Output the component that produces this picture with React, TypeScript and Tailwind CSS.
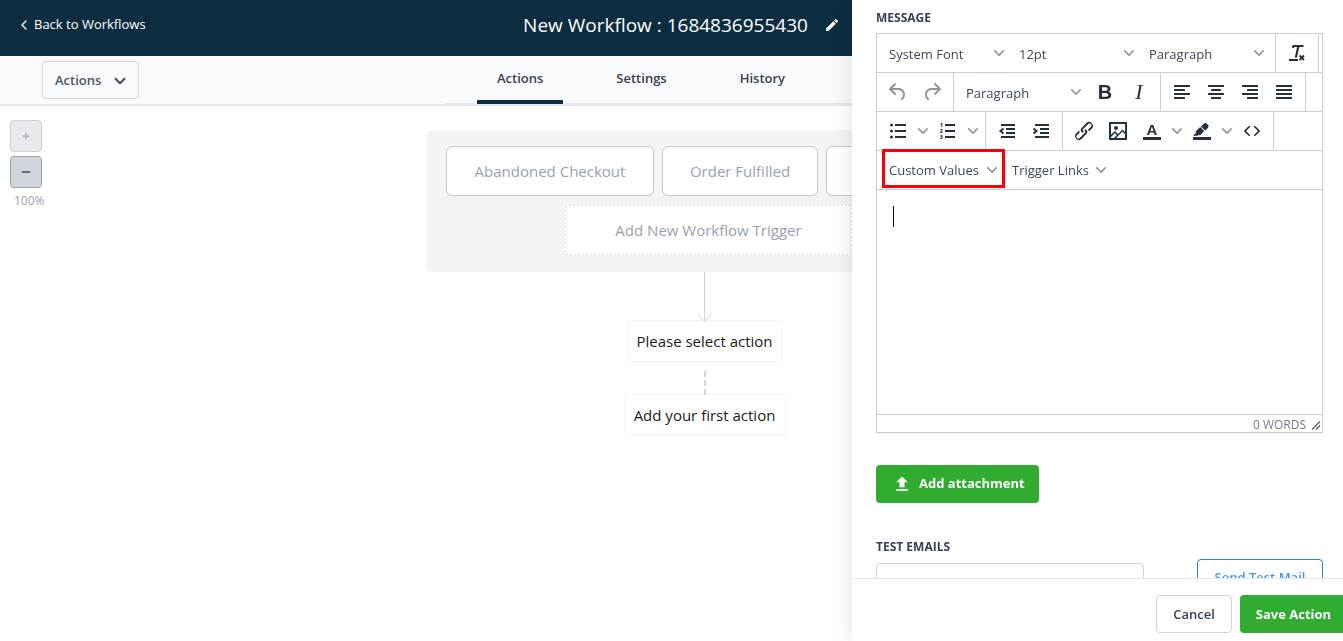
import { ReactNode } from 'react';
import { ChevronDown, ChevronLeft, Minus, Plus } from 'lucide-react';
import { MdEdit, MdFileUpload } from 'react-icons/md';

const tabs = ['Actions', 'Settings', 'History'];

const triggers = [
  { label: 'Abandoned Checkout', width: 'w-52' },
  { label: 'Order Fulfilled', width: 'w-[156px]' },
  { label: '', width: 'w-[137px]' },
];

type AlignLine = [number, number];

const alignLines: Record<string, AlignLine[]> = {
  'Align left': [[4, 16], [4, 11], [4, 16], [4, 11]],
  'Align center': [[4, 16], [7, 10], [4, 16], [7, 10]],
  'Align right': [[4, 16], [9, 11], [4, 16], [9, 11]],
  Justify: [[4, 16], [4, 16], [4, 16], [4, 16]],
};

function Icon({ children }: { children: ReactNode }) {
  return (
    <svg width="24" height="24" viewBox="0 0 24 24" fill="currentColor" aria-hidden="true">
      {children}
    </svg>
  );
}

function SmallChevron() {
  return (
    <svg width="10" height="10" viewBox="0 0 10 10" className="shrink-0 text-[#8f969f]" fill="currentColor" aria-hidden="true">
      <path d="M8.7 2.2c.3-.3.8-.3 1 0 .4.4.4.9 0 1.2L5.7 7.8c-.3.3-.9.3-1.2 0L.2 3.4a.8.8 0 0 1 0-1.2c.3-.3.8-.3 1.1 0L5 6l3.7-3.8z" />
    </svg>
  );
}

function ToolGroup({ children }: { children: ReactNode }) {
  return <div className="flex h-full items-center border-r border-[#ccc] px-1">{children}</div>;
}

function ToolRow({ children }: { children: ReactNode }) {
  return <div className="flex h-[39px] border-b border-[#ccc]">{children}</div>;
}

function ToolButton({ label, disabled, children }: { label: string; disabled?: boolean; children: ReactNode }) {
  return (
    <button
      type="button"
      aria-label={label}
      disabled={disabled}
      className="flex h-[34px] w-[34px] items-center justify-center text-[#222f3e] disabled:text-[#8f969f]"
    >
      {children}
    </button>
  );
}

function SplitArrow({ label }: { label: string }) {
  return (
    <button type="button" aria-label={label} className="flex h-[34px] w-4 items-center justify-center">
      <SmallChevron />
    </button>
  );
}

function ToolSelect({ label, value }: { label: string; value: string }) {
  return (
    <div className="relative flex h-[34px] w-[130px] items-center">
      <select
        aria-label={label}
        defaultValue={value}
        className="h-full w-full appearance-none bg-transparent pt-[3px] pl-2 text-[13px] text-[#3d4856] outline-none"
      >
        <option>{value}</option>
      </select>
      <span className="pointer-events-none absolute right-[7px]">
        <SmallChevron />
      </span>
    </div>
  );
}

function EditorToolbar() {
  return (
    <div>
      <ToolRow>
        <ToolGroup>
          <ToolSelect label="Font" value="System Font" />
          <ToolSelect label="Font size" value="12pt" />
          <ToolSelect label="Block" value="Paragraph" />
        </ToolGroup>
        <ToolGroup>
          <ToolButton label="Clear formatting">
            <Icon>
              <path d="M7.500 4h11v2h-4.200l-2.300 10.500h-2.200l2.300-10.500H9.300L9 7H7zM4 18h9v2H4z" />
              <path d="M14.500 14.500l4.500 4.500m0-4.500l-4.500 4.500" fill="none" stroke="currentColor" strokeWidth="1.800" />
            </Icon>
          </ToolButton>
        </ToolGroup>
      </ToolRow>
      <ToolRow>
        <ToolGroup>
          <ToolButton label="Undo" disabled>
            <Icon>
              <path d="M6.400 8H12c3.700 0 6.200 2 6.800 5.100.6 2.700-.4 5.600-2.300 6.800a1 1 0 0 1-1-1.800c1.100-.6 1.800-2.700 1.400-4.600-.5-2.100-2.100-3.500-4.900-3.500H6.400l3.300 3.300a1 1 0 1 1-1.400 1.400l-5-5a1 1 0 0 1 0-1.400l5-5a1 1 0 0 1 1.400 1.400L6.400 8z" />
            </Icon>
          </ToolButton>
          <ToolButton label="Redo" disabled>
            <Icon>
              <path d="M17.600 10H12c-2.800 0-4.400 1.400-4.900 3.500-.4 2 .3 4 1.400 4.600a1 1 0 1 1-1 1.800c-2-1.200-2.900-4.100-2.300-6.800.6-3 3-5.100 6.800-5.100h5.600l-3.300-3.300a1 1 0 1 1 1.400-1.400l5 5a1 1 0 0 1 0 1.400l-5 5a1 1 0 0 1-1.400-1.400l3.300-3.300z" />
            </Icon>
          </ToolButton>
        </ToolGroup>
        <ToolGroup>
          <ToolSelect label="Paragraph style" value="Paragraph" />
          <ToolButton label="Bold">
            <span className="font-['Liberation_Sans',sans-serif] text-xl leading-5 font-bold">B</span>
          </ToolButton>
          <ToolButton label="Italic">
            <span className="font-['Liberation_Serif',serif] text-[22px] leading-5 italic">I</span>
          </ToolButton>
        </ToolGroup>
        <ToolGroup>
          {Object.entries(alignLines).map(([label, lines]) => (
            <ToolButton key={label} label={label}>
              <Icon>
                {lines.map(([x, width], i) => (
                  <rect key={i} x={x} y={5 + i * 4} width={width} height="2" rx="0.5" />
                ))}
              </Icon>
            </ToolButton>
          ))}
        </ToolGroup>
      </ToolRow>
      <ToolRow>
        <ToolGroup>
          <ToolButton label="Bullet list">
            <Icon>
              <circle cx="5.500" cy="6" r="1.500" />
              <circle cx="5.500" cy="12" r="1.500" />
              <circle cx="5.500" cy="18" r="1.500" />
              <path d="M9 5h11v2H9zM9 11h11v2H9zM9 17h11v2H9z" />
            </Icon>
          </ToolButton>
          <SplitArrow label="Bullet list styles" />
          <ToolButton label="Numbered list">
            <Icon>
              <text x="4" y="8" fontSize="5" fontWeight="800">1</text>
              <text x="4" y="14" fontSize="5" fontWeight="800">2</text>
              <text x="4" y="20" fontSize="5" fontWeight="800">3</text>
              <path d="M9 5h10v2H9zM9 11h10v2H9zM9 17h10v2H9z" />
            </Icon>
          </ToolButton>
          <SplitArrow label="Numbered list styles" />
        </ToolGroup>
        <ToolGroup>
          <ToolButton label="Decrease indent">
            <Icon>
              <path d="M6 5h14v2H6zM11 9h9v2h-9zM11 13h9v2h-9zM6 17h14v2H6z" />
              <path d="M8.500 9.500L5.500 12l3 2.500" fill="none" stroke="currentColor" strokeWidth="2" />
            </Icon>
          </ToolButton>
          <ToolButton label="Increase indent">
            <Icon>
              <path d="M6 5h14v2H6zM11 9h9v2h-9zM11 13h9v2h-9zM6 17h14v2H6z" />
              <path d="M4.500 9.500L7.500 12l-3 2.500" fill="none" stroke="currentColor" strokeWidth="2" />
            </Icon>
          </ToolButton>
        </ToolGroup>
        <ToolGroup>
          <ToolButton label="Link">
            <Icon>
              <path d="M6.200 12.300a1 1 0 0 1 1.400 1.400l-2.100 2a2 2 0 1 0 2.700 2.800l4.800-4.800a1 1 0 0 0 0-1.400 1 1 0 1 1 1.400-1.300 2.900 2.900 0 0 1 0 4L9.600 20a3.900 3.900 0 0 1-5.500-5.500l2-2zm11.600-.6a1 1 0 0 1-1.400-1.400l2-2a2 2 0 1 0-2.600-2.800L11 10.300a1 1 0 0 0 0 1.400A1 1 0 1 1 9.600 13a2.900 2.900 0 0 1 0-4L14.400 4a3.900 3.900 0 0 1 5.500 5.500l-2 2z" />
            </Icon>
          </ToolButton>
          <ToolButton label="Image">
            <Icon>
              <path
                fillRule="evenodd"
                d="M5 15.700l3.300-3.200c.3-.3.7-.3 1 0L12 15l4.100-4c.3-.4.8-.4 1 0l2 1.900V5H5v10.700zM5 18V19h3l2.800-2.900-2-2L5 17.900zm14-3l-2.500-2.400-6.400 6.500H19v-4zM4 3h16c.6 0 1 .4 1 1v16c0 .6-.4 1-1 1H4a1 1 0 0 1-1-1V4c0-.6.4-1 1-1zm6 8a2 2 0 1 0 0-4 2 2 0 0 0 0 4z"
              />
            </Icon>
          </ToolButton>
          <ToolButton label="Text color">
            <Icon>
              <text x="12" y="16" fontSize="15" fontWeight="700" textAnchor="middle" fontFamily="Liberation Sans">A</text>
              <path d="M3 18h18v3H3z" />
            </Icon>
          </ToolButton>
          <SplitArrow label="Text colors" />
          <ToolButton label="Background color">
            <Icon>
              <path d="M3 18h18v3H3z" />
              <path d="M7.700 16.700H3l3.300-3.300-.7-.8L10.200 8l4 4.100-4 4.200c-.2.2-.6.2-.8 0l-.6-.7-1.100 1.100zm5-7.500L11 7.400l3-2.900a2 2 0 0 1 2.600 0L18 6c.7.7.7 2 0 2.700l-2.900 2.900-1.800-1.800-.5-.6" />
            </Icon>
          </ToolButton>
          <SplitArrow label="Background colors" />
          <ToolButton label="Source code">
            <Icon>
              <path d="M9.800 15.700c.3.3.3.8 0 1-.3.4-.9.4-1.200 0l-4.400-4.100a.8.8 0 0 1 0-1.200l4.400-4.200c.3-.3.9-.3 1.200 0 .3.3.3.8 0 1.100L6 12l3.800 3.700zM14.200 15.700c-.3.3-.3.8 0 1 .4.4.9.4 1.200 0l4.400-4.100c.3-.3.3-.8 0-1.200l-4.400-4.200a.8.8 0 0 0-1.200 0c-.3.3-.3.8 0 1.100L18 12l-3.800 3.700z" />
            </Icon>
          </ToolButton>
        </ToolGroup>
      </ToolRow>
      <ToolRow>
        <div className="flex items-center px-1 text-[13px] text-[#3d4856]">
          <button type="button" className="relative flex h-[34px] w-[123px] items-center justify-between pr-[7px] pl-2">
            <span className="pt-0.5">Custom Values</span>
            <SmallChevron />
            <span className="absolute -top-1 -right-px -bottom-px left-px border-3 border-[#fb0007]" />
          </button>
          <button type="button" className="flex h-[34px] w-[109px] items-center justify-between pr-[7px] pl-2">
            <span className="pt-0.5">Trigger Links</span>
            <SmallChevron />
          </button>
        </div>
      </ToolRow>
    </div>
  );
}

function ActionDrawer() {
  return (
    <aside className="fixed inset-y-0 right-0 flex w-[491px] flex-col bg-white shadow-[0_0_20px_rgba(0,0,0,0.12)]">
      <div className="min-h-0 flex-1 overflow-hidden pt-[10px] pr-5 pl-6">
        <h2 className="text-xs leading-4 font-bold text-gray-700">MESSAGE</h2>
        <div className="mt-[7px] border border-[#ccc] shadow-xs">
          <EditorToolbar />
          <div role="textbox" aria-label="Message" tabIndex={0} className="h-56 p-4 outline-none">
            <span className="block h-[21px] w-px bg-black" />
          </div>
          <div className="flex h-[18px] items-center justify-end border-t border-[#ccc] text-xs text-[#727c88]">
            <span className="mr-1 pt-0.5">0 WORDS</span>
            <svg width="12" height="12" viewBox="0 0 12 12" className="mt-1" stroke="#555f6b" strokeWidth="1.300" aria-hidden="true">
              <path d="M2 9.500L10 1.500M6 9.500L10 5.500" />
            </svg>
          </div>
        </div>

        <button
          type="button"
          className="mt-8 flex h-[38px] w-[163px] items-center rounded bg-[#30ad30] pl-4 text-[13px] font-bold text-white"
        >
          <MdFileUpload className="mr-[7px] h-5 w-5" />
          Add attachment
        </button>

        <div className="mt-9 flex items-start justify-between">
          <div className="w-[268px]">
            <label htmlFor="test-emails" className="block text-xs leading-4 font-bold text-gray-700">
              TEST EMAILS
            </label>
            <input id="test-emails" type="text" className="mt-2 h-[38px] w-full rounded border border-gray-300 px-3 text-sm" />
          </div>
          <button
            type="button"
            className="mt-5 h-[38px] w-[126px] rounded border border-[#3182ce] text-[13px] font-semibold text-[#4299e1]"
          >
            Send Test Mail
          </button>
        </div>
      </div>

      <div className="flex h-[63px] justify-end gap-2 overflow-hidden border-t border-gray-200 bg-white pt-4">
        <button type="button" className="h-[38px] w-[76px] rounded border border-gray-300 pt-px text-[13px] font-semibold text-gray-700">
          Cancel
        </button>
        <button type="button" className="-mr-1 h-[38px] w-[107px] rounded bg-[#30ad30] pt-px text-[13px] font-bold text-white">
          Save Action
        </button>
      </div>
    </aside>
  );
}

function WorkflowCanvas() {
  return (
    <main className="flex">
      <div className="flex w-[66px] shrink-0 flex-col gap-1 pt-[14px] pl-[10px]">
        <button
          type="button"
          aria-label="Zoom in"
          disabled
          className="flex h-8 w-8 items-center justify-center rounded border border-gray-400 bg-gray-300 text-gray-600 disabled:opacity-50"
        >
          <Plus size={10} strokeWidth={3} />
        </button>
        <button
          type="button"
          aria-label="Zoom out"
          className="flex h-8 w-8 items-center justify-center rounded border border-gray-400 bg-gray-300 text-gray-500"
        >
          <Minus size={12} strokeWidth={4} />
        </button>
        <span className="pt-px pl-1 text-xs text-gray-400">100%</span>
      </div>

      <div className="flex flex-1 flex-col items-center pt-6">
        <section className="flex w-[557px] flex-col items-center gap-2 rounded-md bg-gray-100 py-4 pl-5 text-[15px] text-gray-400">
          <div className="flex w-full gap-2">
            {triggers.map(({ label, width }) => (
              <div
                key={label}
                className={`flex h-[50px] shrink-0 items-center justify-center rounded-md border border-[#c3cad1] bg-white ${width}`}
              >
                {label}
              </div>
            ))}
          </div>
          <button type="button" className="mr-3 h-[52px] w-[287px] rounded border-2 border-dotted border-gray-200 bg-white">
            Add New Workflow Trigger
          </button>
        </section>

        <svg width="16" height="51" viewBox="0 0 16 51" className="-mb-[3px]" fill="none" stroke="#cbd5e0" aria-hidden="true">
          <path d="M7.500 0v50M.5 42l7 8 7-8" />
        </svg>
        <button type="button" className="h-[42px] w-[154px] rounded border border-dotted border-gray-200 text-[15px] text-[#1a1a1a]">
          Please select action
        </button>
        <svg width="2" height="24" viewBox="0 0 2 24" className="mt-[9px]" stroke="#d1d5db" strokeWidth="2" aria-hidden="true">
          <path d="M1 0v24" strokeDasharray="6 3" />
        </svg>
        <button type="button" className="-mt-px h-[42px] w-[162px] rounded border border-dotted border-gray-200 text-[15px] text-[#1a1a1a]">
          Add your first action
        </button>
      </div>
    </main>
  );
}

export default function App() {
  return (
    <div className="min-h-screen overflow-hidden bg-white font-['Open_Sans','Noto_Sans',sans-serif]">
      <header className="grid h-14 grid-cols-[1fr_auto_1fr] bg-[#0c2d40] text-white">
        <a href="#workflows" className="mt-[15px] flex h-5 items-center gap-0.5 pl-4 text-[13px]">
          <ChevronLeft size={16} />
          Back to Workflows
        </a>
        <div className="mt-[11px] flex h-7 items-center gap-4 pl-5">
          <h1 className="text-[19px]">New Workflow : 1684836955430</h1>
          <button type="button" aria-label="Rename workflow">
            <MdEdit className="h-4 w-4" />
          </button>
        </div>
      </header>

      <div className="flex h-[50px] border-b-2 border-gray-200 bg-gray-50 text-[13px] font-semibold text-gray-700">
        <button
          type="button"
          className="mt-[5px] ml-[42px] flex h-[38px] w-[97px] items-center justify-between rounded border border-gray-300 pt-px pr-[9px] pl-3 text-gray-600"
        >
          Actions
          <ChevronDown size={18} strokeWidth={3} />
        </button>
        <nav className="ml-[306px] flex h-12 flex-1 gap-[33px] border-b border-gray-200 px-8">
          {tabs.map((tab, i) => (
            <a
              key={tab}
              href={`#${tab.toLowerCase()}`}
              className={`flex h-12 items-center border-b-4 px-5 pt-0.5 ${i === 0 ? 'border-[#0c2d40]' : 'border-transparent'}`}
            >
              {tab}
            </a>
          ))}
        </nav>
      </div>

      <WorkflowCanvas />
      <ActionDrawer />
    </div>
  );
}
